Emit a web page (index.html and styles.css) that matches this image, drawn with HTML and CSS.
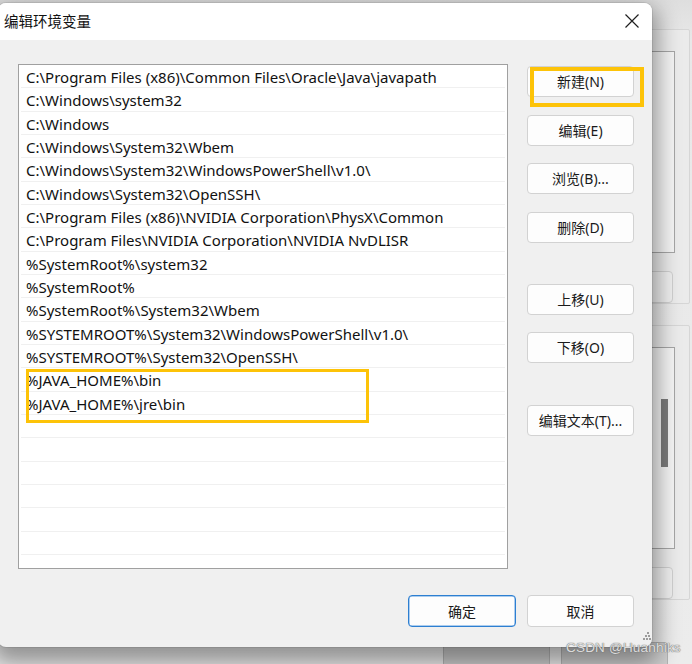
FILE: index.html
```html
<!DOCTYPE html>
<html lang="zh-CN">
<head>
<meta charset="utf-8">
<title>编辑环境变量</title>
<link rel="stylesheet" href="styles.css">
</head>
<body>
<div class="desktop">
  <div class="bgwin">
    <div class="bgpanel">
      <div class="bgbox"></div>
      <div class="bgbtn"></div>
    </div>
    <div class="bgpanel bgpanel2">
      <div class="bgbox"><div class="bgthumb"></div></div>
      <div class="bgbtn"></div>
    </div>
    <div class="bgfooter">
      <div class="bgfbtn"></div>
      <div class="bgfbtn"></div>
    </div>
  </div>

  <div class="dialog">
    <div class="titlebar">
      <div class="title">编辑环境变量</div>
      <div class="close">
        <svg width="16" height="16" viewBox="0 0 16 16"><path d="M1.5 1.5 L14.5 14.5 M14.5 1.5 L1.5 14.5" stroke="#1f1f1f" stroke-width="1.2" fill="none"/></svg>
      </div>
    </div>
    <div class="body">
      <div class="main">
        <div class="list">
          <div class="row">C:\Program Files (x86)\Common Files\Oracle\Java\javapath</div>
          <div class="row">C:\Windows\system32</div>
          <div class="row">C:\Windows</div>
          <div class="row">C:\Windows\System32\Wbem</div>
          <div class="row">C:\Windows\System32\WindowsPowerShell\v1.0\</div>
          <div class="row">C:\Windows\System32\OpenSSH\</div>
          <div class="row">C:\Program Files (x86)\NVIDIA Corporation\PhysX\Common</div>
          <div class="row">C:\Program Files\NVIDIA Corporation\NVIDIA NvDLISR</div>
          <div class="row">%SystemRoot%\system32</div>
          <div class="row">%SystemRoot%</div>
          <div class="row">%SystemRoot%\System32\Wbem</div>
          <div class="row">%SYSTEMROOT%\System32\WindowsPowerShell\v1.0\</div>
          <div class="row">%SYSTEMROOT%\System32\OpenSSH\</div>
          <div class="row">%JAVA_HOME%\bin</div>
          <div class="row">%JAVA_HOME%\jre\bin</div>
          <div class="row"></div>
          <div class="row"></div>
          <div class="row"></div>
          <div class="row"></div>
          <div class="row"></div>
          <div class="row"></div>
          <div class="row"></div>
        </div>
        <div class="side">
          <button class="btn">新建(N)</button>
          <button class="btn">编辑(E)</button>
          <button class="btn">浏览(B)...</button>
          <button class="btn">删除(D)</button>
          <button class="btn gap-up">上移(U)</button>
          <button class="btn">下移(O)</button>
          <button class="btn gap-text">编辑文本(T)...</button>
        </div>
      </div>
      <div class="footer">
        <button class="btn ok">确定</button>
        <button class="btn">取消</button>
      </div>
    </div>
  </div>

  <div class="mark mark-list"></div>
  <div class="mark mark-new"></div>

  <div class="watermark">
    <span class="dots"><i></i><i></i><i></i><i></i><i></i><i></i></span>
    CSDN @Huanhiks
  </div>
</div>
</body>
</html>
```

FILE: styles.css
```css
* { box-sizing: border-box; }
html, body { margin: 0; padding: 0; }
body {
  font-family: "Noto Sans", "Noto Sans CJK SC", sans-serif;
  color: #1a1a1a;
}
.desktop {
  position: relative;
  width: 692px;
  height: 664px;
  overflow: hidden;
  background: linear-gradient(180deg, #dedede 0, #e8e8e8 40px, #ececec 100%);
}

/* background window (behind dialog) */
.bgwin {
  position: absolute;
  left: 420px;
  top: 0;
  width: 272px;
  height: 664px;
  padding: 29px 2px 0 0;
  display: flex;
  flex-direction: column;
}
.bgpanel {
  height: 293px;
  border: 1px solid #d6d6d6;
  border-radius: 2px;
  background: #ebebeb;
  padding: 21px 14px 0 0;
  display: flex;
  flex-direction: column;
  align-items: flex-end;
}
.bgpanel2 { margin-top: 21px; height: 300px; }
.bgbox {
  width: 240px;
  height: 202px;
  border: 1px solid #a5a5a5;
  background: #f4f4f4;
  position: relative;
}
.bgthumb {
  position: absolute;
  left: 225px;
  top: 51px;
  width: 7px;
  height: 68px;
  background: #7b7b7b;
}
.bgbtn {
  width: 240px;
  height: 32px;
  margin-top: 18px;
  margin-right: 2px;
  border: 1px solid #cfcfcf;
  border-radius: 4px;
  background: #efefef;
}
.bgfooter {
  display: flex;
  gap: 11px;
  padding-left: 23px;
  margin-top: 42px;
}
.bgfbtn {
  width: 107px;
  height: 30px;
  border: 1px solid #b4b4b4;
  border-radius: 4px;
  background: #cdcdcd;
}

/* dialog */
.dialog {
  position: absolute;
  left: -2px;
  top: 3px;
  width: 654px;
  height: 644px;
  background: #f0f0f0;
  border-radius: 8px;
  box-shadow: 0 10px 22px 6px rgba(0,0,0,0.38), 0 0 0 1px rgba(0,0,0,0.08);
  display: flex;
  flex-direction: column;
  overflow: hidden;
}
.titlebar {
  height: 37px;
  background: #ffffff;
  display: flex;
  align-items: center;
  justify-content: space-between;
  padding-left: 6px;
  padding-right: 12px;
  flex: none;
}
.title {
  font-size: 14.5px;
  color: #111;
  margin-top: -2px;
}
.close {
  width: 16px;
  height: 16px;
  display: flex;
  margin-top: -1px;
}
.body {
  flex: 1;
  padding: 24px 0 0 20px;
  display: flex;
  flex-direction: column;
}
.main {
  display: flex;
  gap: 19px;
  align-items: flex-start;
}
.list {
  width: 490px;
  height: 505px;
  border: 1px solid #a0a0a0;
  background: #fff;
  padding: 0 2px;
  overflow: hidden;
  flex: none;
}
.row {
  height: 23.33px;
  border-bottom: 1px solid #f0f0f0;
  padding-left: 5px;
  padding-top: 1px;
  font-size: 15px;
  line-height: 23px;
  white-space: nowrap;
  color: #111;
}
.side {
  display: flex;
  flex-direction: column;
  gap: 17.7px;
  padding-top: 2px;
}
.btn {
  width: 107px;
  height: 31px;
  border: 1px solid #d2d2d2;
  border-radius: 4px;
  background: #fdfdfd;
  font-family: "Noto Sans", "Noto Sans CJK SC", sans-serif;
  font-size: 14px;
  color: #1a1a1a;
  padding: 0;
  margin: 0;
  line-height: 29px;
}
.gap-up { margin-top: 23px; }
.gap-text { margin-top: 24px; }
.footer {
  display: flex;
  justify-content: flex-end;
  gap: 11px;
  padding-right: 18px;
  margin-top: 26px;
}
.btn.ok {
  width: 108px;
  height: 32px;
  border: 1px solid #2d7fd1;
  box-shadow: inset 0 0 0 0.5px #5d9de0;
}
.footer .btn { height: 32px; }

/* yellow annotation boxes */
.mark {
  position: absolute;
  border: 3px solid #fdc308;
}
.mark-list { left: 26px; top: 369px; width: 343px; height: 54px; }
.mark-new { left: 530px; top: 67px; width: 114px; height: 40px; border-width: 4px; }

/* watermark */
.watermark {
  position: absolute;
  left: 566px;
  top: 640px;
  font-family: "Liberation Sans", sans-serif;
  font-size: 13.5px;
  letter-spacing: 0.2px;
  color: rgba(235,235,235,0.9);
  text-shadow: 0 0 1px #6d6d6d, 0 0 1px #6d6d6d;
  white-space: nowrap;
}
.dots {
  position: absolute;
  left: 77px;
  top: -8px;
  width: 8px;
  height: 12px;
}
.dots i {
  position: absolute;
  width: 2px;
  height: 2px;
  background: rgba(120,120,120,0.7);
}
.dots i:nth-child(1) { left: 4px; top: 0; }
.dots i:nth-child(2) { left: 2px; top: 3px; }
.dots i:nth-child(3) { left: 5px; top: 3px; }
.dots i:nth-child(4) { left: 0; top: 6px; }
.dots i:nth-child(5) { left: 3px; top: 6px; }
.dots i:nth-child(6) { left: 6px; top: 6px; }
```
